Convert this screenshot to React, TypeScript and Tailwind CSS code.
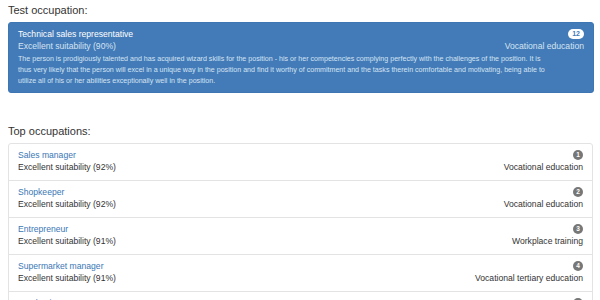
import React from "react";

const topOccupations = [
    { name: "Sales manager", score: 92, rank: 1, education: "Vocational education" },
    { name: "Shopkeeper", score: 92, rank: 2, education: "Vocational education" },
    { name: "Entrepreneur", score: 91, rank: 3, education: "Workplace training" },
    { name: "Supermarket manager", score: 91, rank: 4, education: "Vocational tertiary education" },
    { name: "Purchasing manager", score: 90, rank: 5, education: "Vocational education" },
];

export default function App() {
    return (
        <div
            className="w-[600px] h-[300px] overflow-hidden bg-white pl-2 pr-[6px] text-[#333]"
            style={{ fontFamily: '"Liberation Sans", Arial, sans-serif' }}
        >
            <h3 className="pt-[3px] text-[11px] leading-[14px]">Test occupation:</h3>
            <div className="mt-[5px] rounded-[3px] border border-[#3e76b3] bg-[#437bb8] px-[9px] pt-[5px] pb-[5px] text-white">
                <div className="flex items-center justify-between text-[8.6px] leading-[12px]">
                    <span>Technical sales representative</span>
                    <span className="rounded-[6px] bg-white px-[4px] text-[7px] leading-[10px] font-bold text-[#437bb8]">
                        12
                    </span>
                </div>
                <div className="flex justify-between text-[8.6px] leading-[13px] text-[#d3e3f3]">
                    <span>Excellent suitability (90%)</span>
                    <span>Vocational education</span>
                </div>
                <p className="mt-[1px] pr-[30px] text-[7.1px] leading-[11px] text-[#d3e3f3]">
                    The person is prodigiously talented and has acquired wizard skills for the position - his or her
                    competencies complying perfectly with the challenges of the position. It is thus very likely that the
                    person will excel in a unique way in the position and find it worthy of commitment and the tasks
                    therein comfortable and motivating, being able to utilize all of his or her abilities exceptionally
                    well in the position.
                </p>
            </div>

            <h3 className="mt-[31px] text-[11px] leading-[14px]">Top occupations:</h3>
            <div className="mt-[5px] mr-[1px] rounded-[3px] border border-[#e3e3e3]">
                {topOccupations.map((o) => (
                    <div
                        key={o.rank}
                        className="border-b border-[#e3e3e3] px-[9px] pt-[5px] pb-[6px] text-[8.6px]"
                    >
                        <div className="flex items-center justify-between leading-[12px]">
                            <span className="text-[#3a77b5]">{o.name}</span>
                            <span className="flex h-[10px] min-w-[10px] items-center justify-center rounded-full bg-[#777] px-[2px] text-[6.5px] font-bold text-white">
                                {o.rank}
                            </span>
                        </div>
                        <div className="flex justify-between leading-[13px]">
                            <span>Excellent suitability ({o.score}%)</span>
                            <span>{o.education}</span>
                        </div>
                    </div>
                ))}
            </div>
        </div>
    );
}
